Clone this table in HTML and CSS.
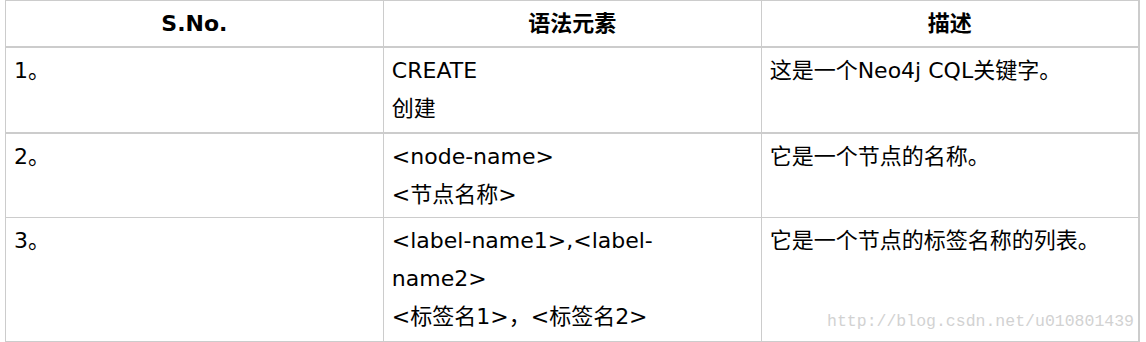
FILE: index.html
```html
<!DOCTYPE html>
<html lang="zh">
<head>
    <meta charset="UTF-8">
    <title>CREATE 语法元素</title>
    <link rel="stylesheet" href="styles.css">
</head>
<body>
    <div class="wrap">
        <table class="syntax-table">
            <thead>
                <tr>
                    <th>S.No.</th>
                    <th>语法元素</th>
                    <th>描述</th>
                </tr>
            </thead>
            <tbody>
                <tr class="first-row">
                    <td>1。</td>
                    <td>CREATE<br>创建</td>
                    <td>这是一个Neo4j CQL关键字。</td>
                </tr>
                <tr>
                    <td>2。</td>
                    <td>&lt;node-name&gt;<br>&lt;节点名称&gt;</td>
                    <td>它是一个节点的名称。</td>
                </tr>
                <tr class="last-row">
                    <td>3。</td>
                    <td>&lt;label-name1&gt;,&lt;label-<br>name2&gt;<br>&lt;标签名1&gt;，&lt;标签名2&gt;</td>
                    <td>它是一个节点的标签名称的列表。</td>
                </tr>
            </tbody>
        </table>
        <div class="watermark">http://blog.csdn.net/u010801439</div>
    </div>
</body>
</html>
```

FILE: styles.css
```css
* {
    margin: 0;
    padding: 0;
    box-sizing: border-box;
}

body {
    background: #fff;
    color: #000;
    font-family: "DejaVu Sans", Verdana, "Noto Sans CJK SC", sans-serif;
}

.wrap {
    position: relative;
    width: 1135px;
    margin-left: 5px;
}

.syntax-table {
    width: 1135px;
    border-collapse: collapse;
    table-layout: fixed;
    font-size: 22px;
    line-height: 38px;
}

.syntax-table th,
.syntax-table td {
    border: 1px solid #cccccc;
    padding: 4px 8px 3px 8px;
    vertical-align: top;
    text-align: left;
    font-weight: normal;
}

.syntax-table th {
    text-align: center;
    font-weight: bold;
    border-bottom: 2px solid #cccccc;
}

.syntax-table th:last-child,
.syntax-table td:last-child {
    border-right: 2px solid #cccccc;
}

.first-row td {
    padding-bottom: 4px;
    border-bottom: 2px solid #cccccc;
}

.last-row td {
    padding-bottom: 5px;
}

.watermark {
    position: absolute;
    right: 6px;
    bottom: 11px;
    font-family: "Liberation Mono", monospace;
    font-size: 16.5px;
    color: #d2d2d2;
}
```
